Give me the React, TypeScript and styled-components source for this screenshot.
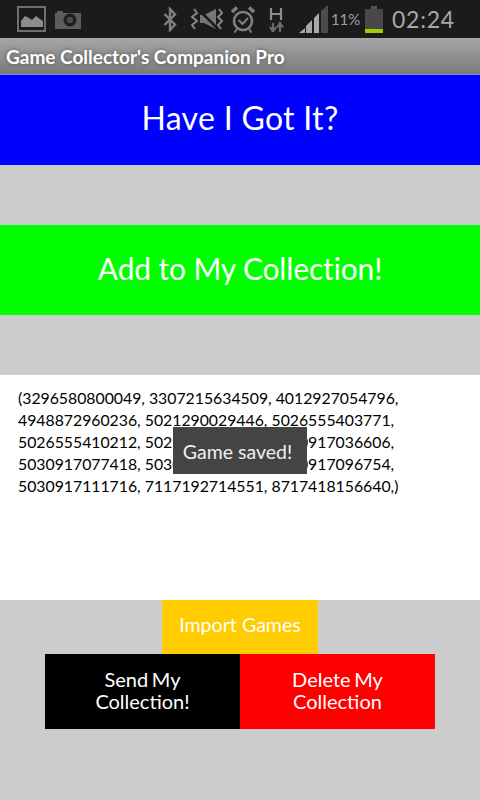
import styled, { createGlobalStyle } from "styled-components";

const GlobalStyle = createGlobalStyle`
  html, body {
    margin: 0;
    padding: 0;
    background: #cccccc;
  }
  * {
    box-sizing: border-box;
  }
`;

const barcodes =
  "(3296580800049, 3307215634509, 4012927054796, 4948872960236, 5021290029446, 5026555403771, 5026555410212, 5029866012187, 5030917036606, 5030917077418, 5030917085642, 5030917096754, 5030917111716, 7117192714551, 8717418156640,)";

function GalleryIcon() {
  return (
    <svg width="29" height="26" viewBox="0 0 29 26">
      <rect x="1" y="1" width="27" height="24" fill="none" stroke="#6f6f6f" strokeWidth="2" />
      <path d="M4 21 V15 L8 10 L12 12 L15 14 L19 10 L23 13 L26 15 V21 Z" fill="#8c8c8c" />
    </svg>
  );
}

function CameraIcon() {
  return (
    <svg width="26" height="19" viewBox="0 0 26 19">
      <path d="M0 3 H2 V1 H8 V3 H26 V19 H0 Z" fill="#5c5c5c" />
      <circle cx="15" cy="10" r="6.5" fill="#222222" />
      <circle cx="15" cy="10" r="4" fill="#4a4a4a" stroke="#151515" />
    </svg>
  );
}

function BluetoothIcon() {
  return (
    <svg width="14" height="25" viewBox="0 0 14 25">
      <path d="M1.5 7 L12 17.5 L7 23 V2 L12 7.5 L1.5 18" fill="none" stroke="#808080" strokeWidth="2.4" />
    </svg>
  );
}

function SilentIcon() {
  return (
    <svg width="32" height="22" viewBox="0 0 32 22">
      <path d="M9 7 H13 L25 1 V21 L13 15 H9 Z" fill="#777777" />
      <path d="M6 0 L28 22" stroke="#1b1b1b" strokeWidth="2.5" />
      <path d="M3 1 L6 5 L1 9 L6 13 L1 17 L4 21" fill="none" stroke="#858585" strokeWidth="2" />
      <path d="M28 1 L31 5 L27 9 L31 13 L27 17 L30 21" fill="none" stroke="#858585" strokeWidth="2" />
    </svg>
  );
}

function AlarmIcon() {
  return (
    <svg width="24" height="27" viewBox="0 0 24 27">
      <circle cx="12" cy="15" r="9" fill="none" stroke="#808080" strokeWidth="2.6" />
      <path d="M7.5 14 L11.5 18 L17 12" fill="none" stroke="#808080" strokeWidth="2" />
      <path d="M1 6 L6 1.5 M23 6 L18 1.5" stroke="#808080" strokeWidth="3.4" />
      <path d="M6 23 L3.5 26.5 M18 23 L20.5 26.5" stroke="#808080" strokeWidth="2" />
    </svg>
  );
}

function NetworkIcon() {
  return (
    <svg width="15" height="25" viewBox="0 0 15 25">
      <path d="M2 1 V13 M12 1 V13 M2 7 H12" stroke="#8e8e8e" strokeWidth="2.2" fill="none" />
      <path d="M4 16 V24 M1 20 L4 24.5 L7 20" stroke="#6a6a6a" strokeWidth="2.2" fill="none" />
      <path d="M11 25 V17 M8 20.5 L11 16 L14 20.5" stroke="#6a6a6a" strokeWidth="2.2" fill="none" />
    </svg>
  );
}

function SignalIcon() {
  return (
    <svg width="30" height="28" viewBox="0 0 30 28">
      <path d="M1 28 L7 23 V28 Z" fill="#a8a8a8" />
      <path d="M8 21 L14 15 V28 H8 Z" fill="#a8a8a8" />
      <path d="M16 13 L21 8 V28 H16 Z" fill="#a8a8a8" />
      <path d="M23 6 L30 0 V28 H23 Z" fill="#4c4c4c" />
    </svg>
  );
}

function BatteryIcon() {
  return (
    <svg width="18" height="27" viewBox="0 0 18 27">
      <rect x="6" y="0" width="6" height="3" fill="#555555" />
      <rect x="0" y="3" width="18" height="20" fill="#484848" />
      <rect x="0" y="23" width="18" height="4" fill="#9fcf00" />
    </svg>
  );
}

export default function App() {
  return (
    <Screen>
      <GlobalStyle />
      <StatusBar>
        <NotificationIcons>
          <GalleryIcon />
          <CameraIcon />
        </NotificationIcons>
        <SystemIcons>
          <BluetoothIcon />
          <RadioIcons>
            <SilentIcon />
            <AlarmIcon />
          </RadioIcons>
          <NetworkIcon />
          <SignalGroup>
            <SignalIcon />
            <Percent>11%</Percent>
            <BatteryIcon />
          </SignalGroup>
          <Clock>02:24</Clock>
        </SystemIcons>
      </StatusBar>
      <TitleBar>Game Collector's Companion Pro</TitleBar>
      <BigButton $bg="#0000ff" $size={32} $spacing={0.3}>
        Have I Got It?
      </BigButton>
      <BigButton $bg="#00ff00" $size={30} $spacing={-0.15}>
        Add to My Collection!
      </BigButton>
      <ListPanel>
        <ListText>{barcodes}</ListText>
        <Toast>Game saved!</Toast>
      </ListPanel>
      <ImportRow>
        <ImportButton>Import Games</ImportButton>
      </ImportRow>
      <ActionRow>
        <ActionButton $bg="#000000">
          Send My
          <br />
          Collection!
        </ActionButton>
        <ActionButton $bg="#ff0000">
          Delete My
          <br />
          Collection
        </ActionButton>
      </ActionRow>
    </Screen>
  );
}

const Screen = styled.div`
  width: 480px;
  height: 800px;
  overflow: hidden;
  background: #cccccc;
  font-family: "Lato", "Liberation Sans", sans-serif;
  color: #ffffff;
`;

const StatusBar = styled.div`
  height: 38px;
  background: #1b1b1b;
  display: flex;
  align-items: center;
  justify-content: space-between;
  padding: 0 25px 0 17px;
`;

const NotificationIcons = styled.div`
  display: flex;
  align-items: center;
  gap: 9px;
`;

const SystemIcons = styled.div`
  display: flex;
  align-items: center;
  gap: 14px;
`;

const RadioIcons = styled.div`
  display: flex;
  align-items: center;
  gap: 8px;
`;

const SignalGroup = styled.div`
  display: flex;
  align-items: center;
  gap: 3px;
`;

const Percent = styled.span`
  width: 31px;
  font-size: 15px;
  color: #a0a0a0;
`;

const Clock = styled.span`
  margin-left: -5px;
  font-size: 23px;
  letter-spacing: 0.8px;
  color: #a8a8a8;
`;

const TitleBar = styled.div`
  height: 37px;
  background: linear-gradient(#a6a6a6, #7a7a7a);
  border-bottom: 1px solid #8888dd;
  padding-left: 6px;
  display: flex;
  align-items: center;
  font-size: 19px;
  font-weight: 700;
  text-shadow: 0 0 4px #555555;
`;

const BigButton = styled.div<{ $bg: string; $size: number; $spacing: number }>`
  height: 90px;
  margin-bottom: 60px;
  padding-bottom: 5px;
  background: ${(p) => p.$bg};
  display: flex;
  align-items: center;
  justify-content: center;
  font-size: ${(p) => p.$size}px;
  letter-spacing: ${(p) => p.$spacing}px;
`;

const ListPanel = styled.div`
  position: relative;
  height: 225px;
  background: #ffffff;
  padding: 12px 60px 0 18px;
`;

const ListText = styled.div`
  width: 390px;
  font-size: 15.8px;
  line-height: 22px;
  color: #000000;
`;

const Toast = styled.div`
  position: absolute;
  left: 173px;
  top: 52px;
  width: 134px;
  height: 47px;
  padding: 1px 5px 0 0;
  background: #444444;
  display: flex;
  align-items: center;
  justify-content: center;
  font-size: 19.5px;
  color: #f0f0f0;
`;

const ImportRow = styled.div`
  display: flex;
  justify-content: center;
`;

const ImportButton = styled.div`
  width: 156px;
  height: 54px;
  padding-bottom: 5px;
  background: #ffcc00;
  display: flex;
  align-items: center;
  justify-content: center;
  font-size: 19.6px;
`;

const ActionRow = styled.div`
  display: flex;
  justify-content: center;
`;

const ActionButton = styled.div<{ $bg: string }>`
  width: 195px;
  height: 75px;
  padding-bottom: 4px;
  background: ${(p) => p.$bg};
  display: flex;
  align-items: center;
  justify-content: center;
  text-align: center;
  font-size: 20px;
  line-height: 22px;
  word-spacing: -1.5px;
`;
